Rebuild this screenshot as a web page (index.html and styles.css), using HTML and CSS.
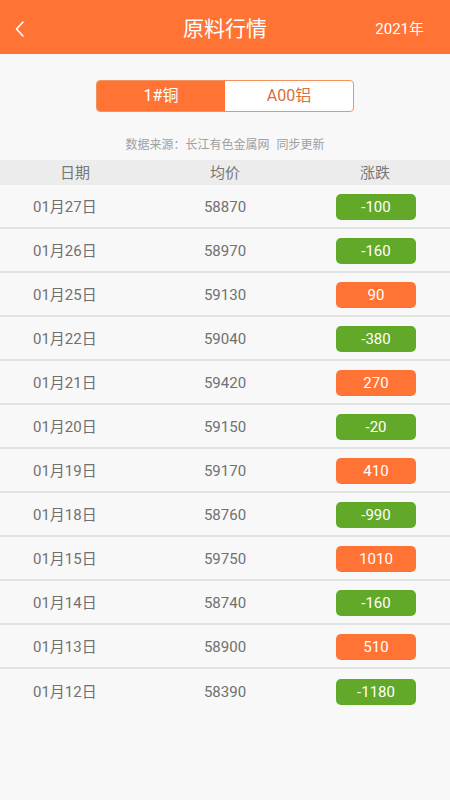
FILE: index.html
```html
<!DOCTYPE html>
<html lang="zh">
<head>
<meta charset="utf-8">
<link rel="stylesheet" href="styles.css">
</head>
<body>
<header class="topbar">
  <span class="back"><svg width="12" height="18" viewBox="0 0 12 18"><path d="M9 2 L2.5 9 L9 16" fill="none" stroke="#fff" stroke-width="1.6" stroke-linecap="round" stroke-linejoin="round"/></svg></span>
  <h1 class="title">原料行情</h1>
  <span class="year">2021年</span>
</header>
<div class="toggle-wrap">
  <div class="toggle">
    <span class="tab active">1#铜</span>
    <span class="tab">A00铝</span>
  </div>
</div>
<p class="source">数据来源：长江有色金属网<span class="gap"></span>同步更新</p>
<div class="thead">
  <span>日期</span><span>均价</span><span>涨跌</span>
</div>
<div class="tbody">
  <div class="row"><span class="date">01月27日</span><span class="price">58870</span><span class="chg"><b class="badge down">-100</b></span></div>
  <div class="row"><span class="date">01月26日</span><span class="price">58970</span><span class="chg"><b class="badge down">-160</b></span></div>
  <div class="row"><span class="date">01月25日</span><span class="price">59130</span><span class="chg"><b class="badge up">90</b></span></div>
  <div class="row"><span class="date">01月22日</span><span class="price">59040</span><span class="chg"><b class="badge down">-380</b></span></div>
  <div class="row"><span class="date">01月21日</span><span class="price">59420</span><span class="chg"><b class="badge up">270</b></span></div>
  <div class="row"><span class="date">01月20日</span><span class="price">59150</span><span class="chg"><b class="badge down">-20</b></span></div>
  <div class="row"><span class="date">01月19日</span><span class="price">59170</span><span class="chg"><b class="badge up">410</b></span></div>
  <div class="row"><span class="date">01月18日</span><span class="price">58760</span><span class="chg"><b class="badge down">-990</b></span></div>
  <div class="row"><span class="date">01月15日</span><span class="price">59750</span><span class="chg"><b class="badge up">1010</b></span></div>
  <div class="row"><span class="date">01月14日</span><span class="price">58740</span><span class="chg"><b class="badge down">-160</b></span></div>
  <div class="row"><span class="date">01月13日</span><span class="price">58900</span><span class="chg"><b class="badge up">510</b></span></div>
  <div class="row last"><span class="date">01月12日</span><span class="price">58390</span><span class="chg"><b class="badge down">-1180</b></span></div>
</div>
</body>
</html>
```
FILE: styles.css
```css
* { box-sizing: border-box; }
html, body { margin: 0; padding: 0; }
body {
  width: 450px;
  height: 800px;
  background: #f8f8f8;
  font-family: Roboto, "Noto Sans CJK SC", sans-serif;
  color: #555;
}
.topbar {
  height: 54px;
  background: #ff7335;
  display: grid;
  grid-template-columns: 1fr auto 1fr;
  align-items: center;
  padding: 0 26px;
  color: #fff;
}
.back { display: flex; align-items: center; padding-top: 4px; margin-left: -12px; }
.title {
  margin: 0;
  font-size: 21px;
  font-weight: 400;
  color: #fff;
  line-height: 24px;
  padding-top: 4px;
}
.year { text-align: right; font-size: 15px; line-height: 20px; padding-top: 4px; }
.toggle-wrap {
  display: flex;
  justify-content: center;
  padding-top: 26px;
}
.toggle {
  display: flex;
  width: 258px;
  height: 32px;
  border: 1px solid #f0935f;
  border-radius: 4px;
  overflow: hidden;
  background: #fff;
}
.tab {
  flex: 1;
  display: flex;
  align-items: center;
  justify-content: center;
  font-size: 16px;
  color: #d86f3a;
  line-height: 20px;
}
.tab.active { background: #ff7335; color: #fff; }
.source {
  margin: 0;
  padding-top: 23px;
  height: 48px;
  text-align: center;
  font-size: 12px;
  color: #a0a0a0;
  line-height: 20px;
}
.gap { display: inline-block; width: 7px; }
.thead {
  display: grid;
  grid-template-columns: 150px 150px 150px;
  height: 25px;
  background: #ececec;
  align-items: center;
  font-size: 15px;
  color: #777;
  line-height: 20px;
}
.thead span { text-align: center; }
.row {
  display: grid;
  grid-template-columns: 150px 150px 150px;
  height: 44px;
  align-items: center;
  border-bottom: 2px solid #e2e2e2;
  font-size: 15px;
  color: #707070;
  line-height: 20px;
}
.row > span { padding-top: 1px; }
.row.last { border-bottom: none; }
.date { padding-left: 33px; }
.price { text-align: center; }
.chg { display: flex; justify-content: center; padding-left: 2px; }
.badge {
  width: 80px;
  height: 26px;
  border-radius: 5px;
  display: flex;
  align-items: center;
  justify-content: center;
  font-weight: 400;
  font-size: 15px;
  color: #fff;
}
.badge.down { background: #62a829; }
.badge.up { background: #ff7335; }
```
